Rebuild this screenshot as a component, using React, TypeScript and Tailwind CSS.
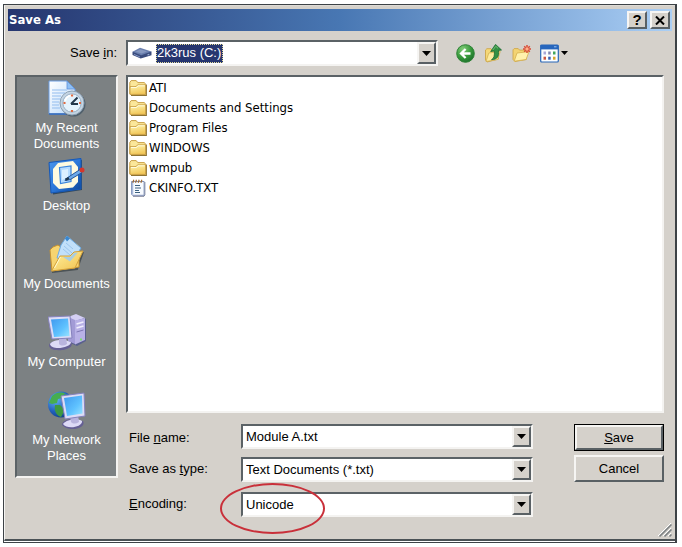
import type { ReactNode } from "react";

const FolderIcon = () => (
  <svg className="size-[18px] shrink-0" viewBox="0 0 18 18">
    <defs>
      <linearGradient id="folder" x1="0" y1="0" x2="0.3" y2="1">
        <stop offset="0" stopColor="#fff6b4" />
        <stop offset="1" stopColor="#f2c95c" />
      </linearGradient>
    </defs>
    <path d="M2 16.3h15.3V5.5" fill="none" stroke="#8e7434" strokeWidth="1.2" />
    <path
      d="M.8 14.8V3.4L2.2 1.6h5l1.6 2h6.6l.8 1v10.6z"
      fill="#fbe79a"
      stroke="#c4973a"
      strokeWidth=".9"
    />
    <path
      d="M1 7.6h6l1.6-1.8h8v9.6H1z"
      fill="url(#folder)"
      stroke="#c4973a"
      strokeWidth=".8"
    />
    <path d="M2 8.5h5.6l1.4-1.7h6.8" fill="none" stroke="#fffbdc" />
  </svg>
);

const TextFileIcon = () => (
  <svg className="size-[18px] shrink-0" viewBox="0 0 18 18">
    <path d="M4 17.2h11l.8-1.4V3" fill="none" stroke="#6a7088" />
    <path d="M2.5 2.5h12.6v13.8H3.4l-.9-1.2z" fill="#f8fbff" stroke="#8192b8" />
    <path d="M3.5 3v12.5" stroke="#a9bbdc" strokeWidth="1.5" />
    <path d="M6 6.5h5M6 9h6M6 11.5h4M6 13.5h5" stroke="#3e6382" />
    <path
      d="M3.8 3.8l1-3M6.5 3.8l1-3M9.2 3.8l1-3M11.9 3.8l1-3"
      stroke="#a16c36"
      strokeWidth="1.2"
    />
  </svg>
);

const DriveIcon = () => (
  <svg className="h-3 w-5 shrink-0" viewBox="0 0 20 12">
    <path d="M.5 4.8V8l8.2 3.6 10.8-3.4V4.6z" fill="#3a4c7d" />
    <path d="M.5 4.8L8 .8l11.5 3.8-10.3 3.6z" fill="#6a7fae" />
    <path d="M3.5 4.7L8.2 2.2l7 2.3-5.6 2z" fill="#8799c0" />
    <path d="M2 7.4l6 2.6" stroke="#8093c1" />
    <path d="M15.5 8l1.8-.6" stroke="#9fb3d8" strokeWidth="1.3" />
  </svg>
);

const BackIcon = () => (
  <svg className="size-[19px]" viewBox="0 0 19 19">
    <defs>
      <radialGradient id="back" cx=".35" cy=".25" r=".8">
        <stop offset="0" stopColor="#82cc79" />
        <stop offset=".6" stopColor="#36983a" />
        <stop offset="1" stopColor="#1d702c" />
      </radialGradient>
    </defs>
    <circle cx="9.5" cy="9.5" r="8.8" fill="url(#back)" stroke="#2d8235" />
    <path
      d="M14.5 9.5H5.2M9.6 5L5 9.5l4.6 4.5"
      fill="none"
      stroke="#fff"
      strokeWidth="2.3"
    />
  </svg>
);

const UpFolderIcon = () => (
  <svg className="size-[19px]" viewBox="0 0 19 19">
    <path
      d="M1.5 16V6l1.4-1.3h4l1.4 1.5h5.2l1 1V15L3 18z"
      fill="#f5d877"
      stroke="#c9a03e"
      strokeWidth=".8"
    />
    <path
      d="M2 17.5L4.8 9l11.5-1.5-2.6 8z"
      fill="#fdeb9f"
      stroke="#ceaa4c"
      strokeWidth=".7"
    />
    <path
      d="M7.5 15.6c2.6-1.2 3.2-4 2.8-8.6l-3.6.5L11.5.4l6 5.6-3 .4c.6 6-1 9.2-7 9.2z"
      fill="#329044"
      stroke="#196a30"
      strokeWidth=".8"
    />
    <path d="M8.8 6l3-3.7 2.2 2" fill="none" stroke="#73bd72" />
  </svg>
);

const NewFolderIcon = () => (
  <svg className="size-[19px]" viewBox="0 0 19 19">
    <path
      d="M1 15.5V5.8l1.2-1.2h4l1.4 1.5h5.6l1 1v8.4L3 17.5z"
      fill="#f3d373"
      stroke="#cba243"
      strokeWidth=".8"
    />
    <path
      d="M2.2 17.2L5 9l12-1.4-2.9 7.9z"
      fill="#fff1ac"
      stroke="#d5b04e"
      strokeWidth=".8"
    />
    <g stroke="#d94a35" strokeWidth="1.5">
      <path d="M15 1v8M11 5h8M12.2 2.2l5.6 5.6M17.8 2.2l-5.6 5.6" />
    </g>
    <circle cx="15" cy="5" r="1.7" fill="#ffb08a" />
  </svg>
);

const ViewsIcon = () => (
  <svg className="size-[19px]" viewBox="0 0 19 19">
    <rect
      x=".7"
      y="1"
      width="17.6"
      height="17"
      rx="1"
      fill="#fdfefe"
      stroke="#2866b8"
      strokeWidth="1.2"
    />
    <path d="M.7 1h17.6v4.4H.7z" fill="#2766bd" />
    <path d="M14 2.8h2.5" stroke="#9cc2ee" />
    <path d="M3.5 7.5H6v3H3.5z" fill="#a9a8d8" />
    <path d="M8.2 7.5h2.5v3H8.2z" fill="#7f86b0" />
    <path d="M13 7.5h2.5v3H13z" fill="#42a65b" />
    <path d="M3.5 12.7H6v3H3.5z" fill="#c95742" />
    <path d="M8.2 12.7h2.5v3H8.2z" fill="#365fb3" />
    <path d="M13 12.7h2.5v3H13z" fill="#d8a52d" />
  </svg>
);

const RecentIcon = () => (
  <svg className="size-[38px]" viewBox="0 0 38 38">
    <defs>
      <linearGradient id="page" x1="0" y1="0" x2="1" y2="1">
        <stop offset="0" stopColor="#fff" />
        <stop offset="1" stopColor="#b9d9fa" />
      </linearGradient>
    </defs>
    <path d="M1 2h18l8 8v25H1z" fill="url(#page)" stroke="#6c9de1" />
    <path d="M19 2v8h8z" fill="#8fc0f5" stroke="#5e91da" strokeWidth=".8" />
    <path
      d="M4 11h15M4 14h13M4 17h9M4 20h8M4 23h7M4 26h7M4 29h8"
      stroke="#93bdee"
    />
    <path d="M1 35h22" stroke="#3168bb" strokeWidth="1.5" />
    <circle cx="25.2" cy="25.2" r="12.3" fill="#52616d" />
    <circle cx="24" cy="24" r="12" fill="#c5d5e3" stroke="#8ea2b4" />
    <circle cx="24" cy="24" r="9.2" fill="#e4f3fd" stroke="#9ab0c5" />
    <path d="M17 22a7 7 0 017-5.5" fill="none" stroke="#fff" strokeWidth="2" />
    <path d="M23 25l6.5-6.5M23 25h7" stroke="#24384b" strokeWidth="2" />
    <path
      d="M24 15.5v2M24 31v2M15.5 24h2M31 24h2"
      stroke="#e06a40"
      strokeWidth="2.2"
    />
  </svg>
);

const DesktopIcon = () => (
  <svg className="size-[38px]" viewBox="0 0 38 38">
    <defs>
      <linearGradient id="desk" x1="0" y1="0" x2="1" y2="1">
        <stop offset="0" stopColor="#4d97ec" />
        <stop offset=".5" stopColor="#2c78da" />
        <stop offset="1" stopColor="#0c4596" />
      </linearGradient>
    </defs>
    <path d="M4 7L34 3v30L5 37.5z" fill="#33495e" />
    <path d="M1 5.5L33 1.5V32L3 36z" fill="url(#desk)" stroke="#1458b9" />
    <path d="M10 6l15-2 5 6v15l-5 5.5L11 32l-6-6V12z" fill="#fffbe0" />
    <path
      d="M11.5 10.5L23 9v15.5L12.500 26.500z"
      fill="#b5dcff"
      stroke="#3984dc"
      strokeWidth="1.2"
    />
    <path d="M14 13l6-1v8l-6 3z" fill="#dcf0ff" />
    <path
      d="M19 21l13-8.500 2 3L22 22.700l-5 .8z"
      fill="#6ca9ea"
      stroke="#265798"
    />
    <path d="M17.500 22.700l3.500-1.500" stroke="#20384d" strokeWidth="2.500" />
    <circle cx="34" cy="13" r="2.500" fill="#d4362c" />
  </svg>
);

const DocumentsIcon = () => (
  <svg className="size-[38px]" viewBox="0 0 38 38">
    <defs>
      <linearGradient id="docs" x1="0" y1="0" x2="1" y2="1">
        <stop offset="0" stopColor="#fff2a1" />
        <stop offset="1" stopColor="#f0c04c" />
      </linearGradient>
    </defs>
    <path d="M4 37l25-3 6-17" fill="none" stroke="#4c5356" strokeWidth="2" />
    <path d="M2 15l3-3 5-2 4 3 15-4 2 3v20L4 36z" fill="#f6d470" stroke="#c8932f" />
    <path d="M19 1l14 12-9 14-15-4 4-13z" fill="#c1e0fa" stroke="#6caae1" />
    <path d="M17 3.500l2-2.500 3 2.500-3 3z" fill="#3b87ce" />
    <path d="M18 8l7 6M16 11l8 7M15 14l7 6" stroke="#9cc6ee" />
    <path
      d="M3.500 36l8.500-15h10l4-4 9-1-8 17z"
      fill="url(#docs)"
      stroke="#d2a03a"
    />
    <path d="M15 22h7l4-4 4-.5-8 9z" fill="#a9cde0" />
    <path d="M12.500 22l-6 11" stroke="#fffbd0" />
  </svg>
);

const ComputerIcon = () => (
  <svg className="size-[38px]" viewBox="0 0 38 38">
    <defs>
      <linearGradient id="screen" x1="0" y1="0" x2="1" y2="1">
        <stop offset="0" stopColor="#3f98ee" />
        <stop offset=".6" stopColor="#5fc2ff" />
        <stop offset="1" stopColor="#9be4ff" />
      </linearGradient>
    </defs>
    <path d="M20 5l9-3 9 4v22l-9 5-9-4z" fill="#59608e" />
    <path d="M20 4l8-3 9 4-10 3z" fill="#d4cff4" />
    <path d="M20 4l7 3v24l-7-3z" fill="#a29bd6" />
    <path d="M27 7.500L37 5v22l-10 4.500z" fill="#b8b1e6" />
    <path d="M28.500 11l7-2M28.500 15l7-2" stroke="#f0eefe" strokeWidth="1.500" />
    <path d="M28.500 19l7-2" stroke="#7d76b4" />
    <path d="M32 26.500h2" stroke="#7be06e" strokeWidth="2" />
    <path d="M1 32c2-5 14-6 22-3 4 6-8 9-14 8-5 0-8-2-8-5z" fill="#655f94" />
    <path d="M2 31c3-5 15-5 21-2 0 6-20 9-21 2z" fill="#dddaf6" />
    <path d="M11 24h7l1 7c-3 2-6 2-8 0z" fill="#b9b4de" />
    <path d="M0 4l22-1 2 22-20 1z" fill="#dcdcf6" stroke="#8682bd" />
    <path d="M3 6.500l17-1 1.500 17.500-15.500 1z" fill="url(#screen)" />
  </svg>
);

const NetworkIcon = () => (
  <svg className="size-[38px]" viewBox="0 0 38 38">
    <defs>
      <radialGradient id="globe" cx=".3" cy=".3" r=".8">
        <stop offset="0" stopColor="#65b4f1" />
        <stop offset=".6" stopColor="#205fbc" />
        <stop offset="1" stopColor="#103b7e" />
      </radialGradient>
    </defs>
    <circle cx="13" cy="13.500" r="13" fill="url(#globe)" />
    <path d="M4 5c4-4 9-4 13-3l-3 5-4 1-1 4-5 1-3-1z" fill="#47ad4f" />
    <path d="M7 14l5 0 5 5-4 7C8 24 6 20 7 14z" fill="#3e9842" />
    <path d="M17 3l6 3v5l-7-3z" fill="#4da94c" />
    <path d="M14 34c0-4 7-7 13-5l8 1c4 7-14 12-21 4z" fill="#655f94" />
    <path d="M15 33c4-5 15-6 19-3 1 6-15 9-19 3z" fill="#dddaf6" />
    <path d="M22 25l8-1 1 7c-3 2-6 2-8 0z" fill="#b9b4de" />
    <path d="M13 5l23-3 1 23-20 3z" fill="#dcdcf6" stroke="#8682bd" />
    <path d="M16 7l18-2.500.500 18L19 25z" fill="url(#screen)" />
  </svg>
);

const Arrow = () => (
  <svg className="h-[5px] w-[9px]" viewBox="0 0 9 5">
    <path d="M0 0h9L4.500 5z" fill="#000" />
  </svg>
);

const places = [
  { label: "My Recent Documents", icon: <RecentIcon /> },
  { label: "Desktop", icon: <DesktopIcon /> },
  { label: "My Documents", icon: <DocumentsIcon /> },
  { label: "My Computer", icon: <ComputerIcon /> },
  { label: "My Network Places", icon: <NetworkIcon /> },
];

const files = [
  { name: "ATI", folder: true },
  { name: "Documents and Settings", folder: true },
  { name: "Program Files", folder: true },
  { name: "WINDOWS", folder: true },
  { name: "wmpub", folder: true },
  { name: "CKINFO.TXT", folder: false },
];

const sunken =
  "border-2 border-t-[#5b6266] border-l-[#5b6266] border-r-[#f4f3f1] border-b-[#f4f3f1]";
const raised =
  "border-2 border-t-[#f6f5f3] border-l-[#f6f5f3] border-r-[#596064] border-b-[#596064] bg-[#d5d1cb]";

const Combo = ({ children }: { children: ReactNode }) => (
  <div className={`flex min-w-0 flex-1 items-stretch bg-white ${sunken}`}>
    {children}
    <button
      type="button"
      aria-label="Open list"
      className={`flex w-[19px] shrink-0 items-center justify-center ${raised}`}
    >
      <Arrow />
    </button>
  </div>
);

const field =
  "min-w-0 flex-1 appearance-none bg-transparent pl-[3px] text-[13px] leading-5 outline-none";

const App = () => {
  return (
    <div className="flex min-h-screen flex-col bg-white pt-1 pr-[5px] pb-1 pl-[3px] font-['Liberation_Sans',Arial,sans-serif] text-[13px] leading-4 text-black">
      <div className="flex flex-1 flex-col border border-r-2 border-[#3d4246] bg-white pb-px">
        <main className="flex flex-1 flex-col border-t border-b-2 border-l border-t-[#dedbd6] border-b-[#4b5256] border-l-[#f5f4f2] bg-[#d5d1cb] px-[3px] pt-[3px]">
          <header className="flex h-[22px] items-center gap-[3px] bg-linear-to-r from-[#26366f] via-[#4877b3] via-50% to-[#abcff5] pr-0.5 pl-px">
            <h1 className="flex-1 font-['DejaVu_Sans_Condensed','DejaVu_Sans',sans-serif] text-[13px] font-bold text-white">
              Save As
            </h1>
            <button
              type="button"
              aria-label="Help"
              className={`flex h-[18px] w-5 items-center justify-center text-[15px] font-bold ${raised}`}
            >
              ?
            </button>
            <button
              type="button"
              aria-label="Close"
              className={`flex h-[18px] w-5 items-center justify-center ${raised}`}
            >
              <svg className="h-[9px] w-2.5" viewBox="0 0 10 9">
                <path d="M1 .5l8 8M9 .5l-8 8" stroke="#000" strokeWidth="2" />
              </svg>
            </button>
          </header>

          <div className="grid grid-cols-[103px_minmax(0,1fr)] gap-x-2 gap-y-[9px] pt-[9px] pr-2 pl-[7px]">
            <label htmlFor="save-in" className="self-center pr-px text-right">
              Save <u>i</u>n:
            </label>
            <div className="flex h-[26px] items-center">
              <div className="flex h-full w-[58%] items-stretch">
                <Combo>
                  <div className="flex flex-1 items-center gap-1 pl-1">
                    <DriveIcon />
                    <select
                      id="save-in"
                      className="h-[19px] appearance-none border border-dotted border-[#e4dc9c] bg-[#26366f] text-[13px] leading-4 text-white outline-none"
                    >
                      <option>2k3rus (C:)</option>
                    </select>
                  </div>
                </Combo>
              </div>
              <div className="ml-[18px] flex items-center gap-[9px]">
                <button type="button" aria-label="Back">
                  <BackIcon />
                </button>
                <button type="button" aria-label="Up one level">
                  <UpFolderIcon />
                </button>
                <button type="button" aria-label="New folder">
                  <NewFolderIcon />
                </button>
                <button
                  type="button"
                  aria-label="Views"
                  className="flex items-center gap-0.5"
                >
                  <ViewsIcon />
                  <svg className="h-1 w-[7px]" viewBox="0 0 7 4">
                    <path d="M0 0h7L3.500 4z" fill="#000" />
                  </svg>
                </button>
              </div>
            </div>

            {/* Places bar */}
            <nav className={`self-start bg-[#7c8183] pt-0.5 pb-[7px] ${sunken}`}>
              {places.map((place) => (
                <button
                  key={place.label}
                  type="button"
                  className="flex h-[78px] w-full flex-col items-center gap-[3px] px-1 text-white"
                >
                  {place.icon}
                  <span>{place.label}</span>
                </button>
              ))}
            </nav>

            <div>
              <ul className={`h-[338px] overflow-auto bg-white pt-px ${sunken}`}>
                {files.map((file) => (
                  <li key={file.name}>
                    <button
                      type="button"
                      className="flex h-5 items-center gap-0.5 pl-px font-['DejaVu_Sans_Condensed','DejaVu_Sans',sans-serif] text-[13px]"
                    >
                      {file.folder ? <FolderIcon /> : <TextFileIcon />}
                      {file.name}
                    </button>
                  </li>
                ))}
              </ul>

              <form className="flex gap-[41px] pt-[11px]">
                <div className="flex min-w-0 flex-1 flex-col gap-2">
                  <div className="flex h-[25px]">
                    <label htmlFor="file-name" className="w-[115px] pt-1.5 pl-[3px]">
                      File <u>n</u>ame:
                    </label>
                    <Combo>
                      <input
                        id="file-name"
                        type="text"
                        defaultValue="Module A.txt"
                        className={field}
                      />
                    </Combo>
                  </div>
                  <div className="flex h-[25px]">
                    <label htmlFor="file-type" className="w-[115px] pt-1 pl-[3px]">
                      Save as <u>t</u>ype:
                    </label>
                    <Combo>
                      <select id="file-type" className={field}>
                        <option>Text Documents (*.txt)</option>
                      </select>
                    </Combo>
                  </div>
                  <div className="relative mt-0.5 flex h-[25px]">
                    <label htmlFor="encoding" className="w-[115px] pt-1 pl-[3px]">
                      <u>E</u>ncoding:
                    </label>
                    <Combo>
                      <select id="encoding" className={field}>
                        <option>Unicode</option>
                      </select>
                    </Combo>
                    <div className="pointer-events-none absolute -top-[9px] left-[94px] h-[51px] w-[105px] rounded-[50%] border-2 border-[#c9303a]" />
                  </div>
                </div>
                <div className="flex w-[90px] shrink-0 flex-col gap-1">
                  <button
                    type="button"
                    className="h-[27px] border border-black bg-[#d5d1cb] p-0"
                  >
                    <span className={`flex h-full items-center justify-center ${raised}`}>
                      <span>
                        <u>S</u>ave
                      </span>
                    </span>
                  </button>
                  <button type="button" className={`h-[27px] ${raised}`}>
                    Cancel
                  </button>
                </div>
              </form>
            </div>
          </div>

          <div className="mt-auto flex justify-end pb-0.5">
            <svg className="size-[14px]" viewBox="0 0 14 14">
              <path d="M0 13L13 0M5 13l8-8M10 13l3-3" stroke="#fff" />
              <path
                d="M1.500 13.500l12-12M6.500 13.500l7-7M11.500 13.500l2-2"
                stroke="#7b8083"
                strokeWidth="1.500"
              />
            </svg>
          </div>
        </main>
      </div>
    </div>
  );
};

export default App;
